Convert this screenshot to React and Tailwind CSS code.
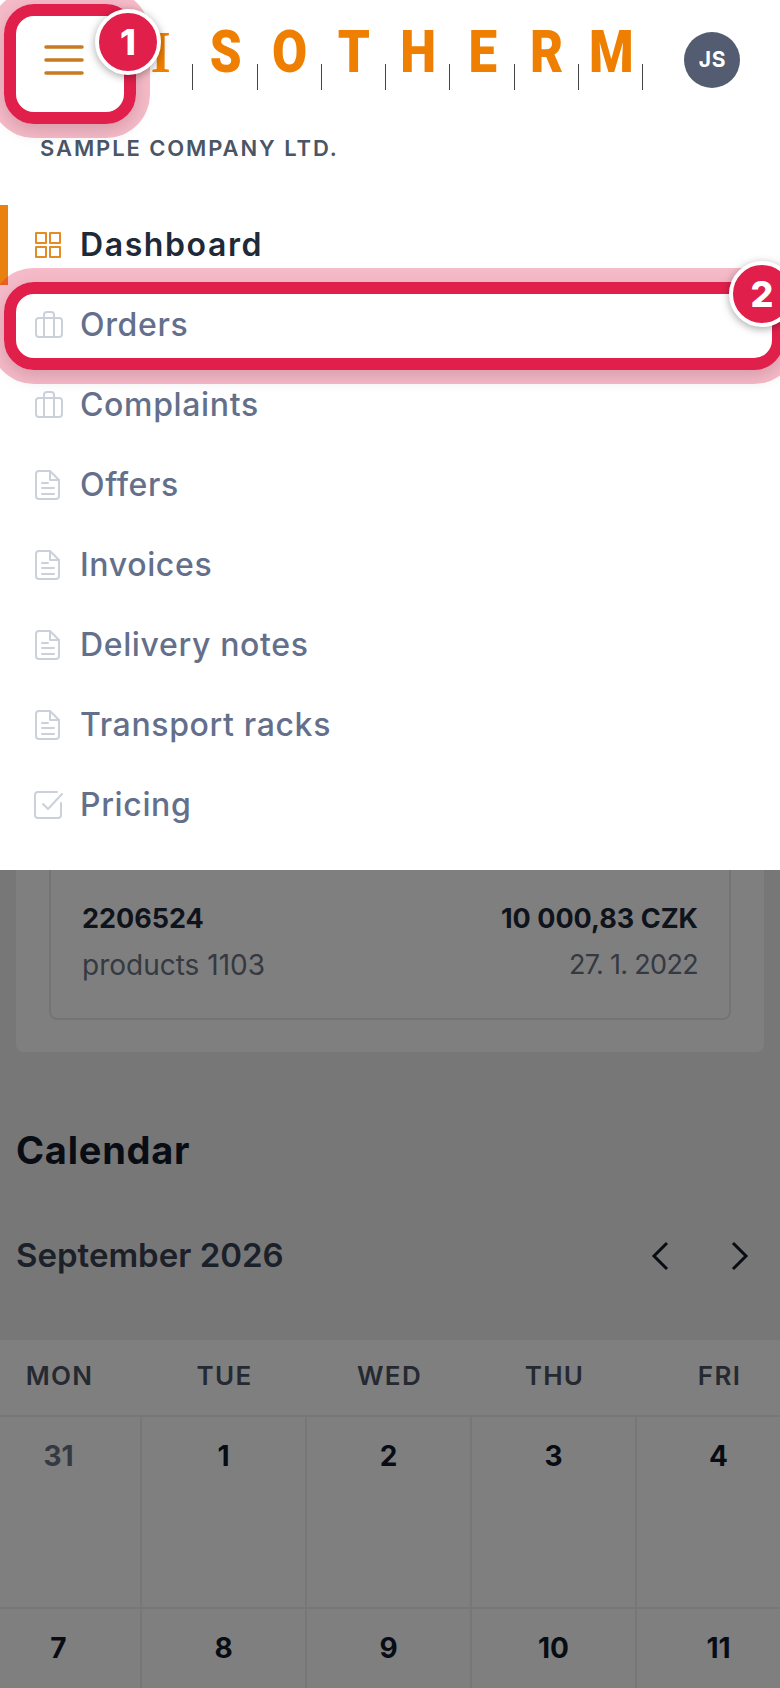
const LOGO = ['I', 'S', 'O', 'T', 'H', 'E', 'R', 'M'];

const MENU = [
    { label: 'Orders', icon: 'case', marked: true },
    { label: 'Complaints', icon: 'case' },
    { label: 'Offers', icon: 'doc' },
    { label: 'Invoices', icon: 'doc' },
    { label: 'Delivery notes', icon: 'doc' },
    { label: 'Transport racks', icon: 'doc' },
    { label: 'Pricing', icon: 'check' },
];

const WEEKDAYS = ['MON', 'TUE', 'WED', 'THU', 'FRI'];
const ROWS = [
    [31, 1, 2, 3, 4],
    [7, 8, 9, 10, 11],
];

function NavIcon({ name }) {
    if (name === 'grid') {
        return (
            <svg width="28" height="28" viewBox="0 0 28 28" fill="none" stroke="#e58a24" strokeWidth="2" strokeLinejoin="round">
                <rect x="2" y="2" width="10" height="10" />
                <rect x="16" y="2" width="10" height="10" />
                <rect x="2" y="16" width="10" height="10" />
                <rect x="16" y="16" width="10" height="10" />
            </svg>
        );
    }
    if (name === 'case') {
        return (
            <svg width="30" height="28" viewBox="0 0 30 28" fill="none" stroke="#cbd1db" strokeWidth="2" strokeLinejoin="round">
                <rect x="2" y="7" width="26" height="19" rx="3" />
                <path d="M10 26V4a3 3 0 0 1 3-3h4a3 3 0 0 1 3 3v22" />
            </svg>
        );
    }
    if (name === 'check') {
        return (
            <svg width="30" height="28" viewBox="0 0 30 28" fill="none" stroke="#cbd1db" strokeWidth="2" strokeLinecap="round" strokeLinejoin="round">
                <path d="M23 1H4a3 3 0 0 0-3 3v20a3 3 0 0 0 3 3h20a3 3 0 0 0 3-3V12" />
                <path d="M9 13l5 5L28 3" />
            </svg>
        );
    }
    return (
        <svg width="28" height="30" viewBox="0 0 28 30" fill="none" stroke="#cbd1db" strokeWidth="2" strokeLinecap="round" strokeLinejoin="round">
            <path d="M5 1h11l9 9v16a3 3 0 0 1-3 3H5a3 3 0 0 1-3-3V4a3 3 0 0 1 3-3z" />
            <path d="M16 1v9h9M8 13h6M8 18h12M8 24h12" />
        </svg>
    );
}

function Badge({ children, className }) {
    return (
        <div className={`absolute z-30 flex h-[66px] w-[66px] items-center justify-center rounded-full border-4 border-white bg-[#e01f4b] text-[36px] font-extrabold text-white shadow-[0_2px_8px_rgba(0,0,0,0.35)] ${className}`}>
            {children}
        </div>
    );
}

export default function App() {
    return (
        <div className="relative h-[1688px] w-[780px] overflow-hidden bg-[#efefef] font-['Inter',sans-serif]">
            <div className="pt-[800px]">
                <div className="mx-4 rounded-lg bg-white px-[33px] pb-[32px] pt-[33px]">
                    <div className="rounded-lg border-2 border-[#e8e8ea] px-[31px] pb-[32px] pt-[63px] text-[27px] leading-[42px]">
                        <div className="flex justify-between font-bold text-gray-800">
                            <span>2206524</span>
                            <span>10 000,83 CZK</span>
                        </div>
                        <div className="mt-[4px] flex justify-between text-gray-500">
                            <span className="text-[28px]">products 1103</span>
                            <span className="tracking-tight">27. 1. 2022</span>
                        </div>
                    </div>
                </div>

                <h2 className="ml-4 mt-[71px] text-[38px] font-bold leading-[54px] tracking-[0.02em] text-gray-900">Calendar</h2>

                <div className="mt-[55px] flex h-12 items-center justify-between px-4">
                    <span className="text-[33px] font-semibold text-gray-700">September 2026</span>
                    <div className="mr-[15px] flex gap-[62px]">
                        <svg width="18" height="30" viewBox="0 0 18 30" fill="none" stroke="#111827" strokeWidth="3"><path d="M16 2L3 15l13 13" /></svg>
                        <svg width="18" height="30" viewBox="0 0 18 30" fill="none" stroke="#111827" strokeWidth="3"><path d="M2 2l13 13L2 28" /></svg>
                    </div>
                </div>

                <div className="mt-[60px] bg-white">
                    <div className="ml-[-23px] grid w-[825px] grid-cols-5 border-b-2 border-[#eeeeee]">
                        {WEEKDAYS.map((d) => (
                            <div key={d} className="flex h-[75px] items-center justify-center pb-1 text-[26px] font-semibold tracking-[0.05em] text-gray-600">{d}</div>
                        ))}
                    </div>
                    {ROWS.map((row, i) => (
                        <div key={i} className="ml-[-23px] grid w-[825px] grid-cols-5">
                            {row.map((n) => (
                                <div key={n} className={`h-[192px] border-b-2 border-r-2 border-[#eeeeee] pt-[18px] text-center text-[28px] font-bold ${n === 31 ? 'text-gray-500' : 'text-gray-900'}`}>{n}</div>
                            ))}
                        </div>
                    ))}
                </div>
            </div>

            <div className="absolute inset-0 z-10 bg-black/50" />

            <div className="absolute inset-x-0 top-0 z-20 h-[870px] bg-white">
                <div className="flex h-[120px] items-center">
                    <div className="flex w-[129px] items-center pl-[44px]">
                        <svg width="40" height="30" viewBox="0 0 40 30" fill="none" stroke="#c77a1f" strokeWidth="3.5" strokeLinecap="round">
                            <path d="M2 2h36M2 15h36M2 28h36" />
                        </svg>
                    </div>
                    <div className="flex">
                        {LOGO.map((l) => (
                            <div key={l} className="relative h-[120px] w-[64.3px] text-center">
                                <span className={`inline-block origin-center scale-x-[0.85] text-[60px] font-black leading-[104px] text-[#ee7f00] ${l === 'I' ? "font-['Liberation_Serif']" : "font-['Roboto']"}`}>{l}</span>
                                <span className="absolute right-0 top-[64px] h-[26px] w-px bg-[#444444]" />
                            </div>
                        ))}
                    </div>
                    <div className="ml-[41px] flex h-14 w-14 items-center justify-center rounded-full bg-[#535c70] text-[21px] font-bold tracking-wide text-white">JS</div>
                </div>

                <div className="mt-[1px] pl-10 text-[22px] font-semibold leading-[54px] tracking-[1.9px] text-gray-600">SAMPLE COMPANY LTD.</div>

                <nav className="mt-[30px]">
                    <div className="flex h-20 items-center gap-[18px] border-l-8 border-[#ea800f] pl-[26px] text-[32px] font-semibold tracking-[0.05em] text-gray-800">
                        <NavIcon name="grid" />
                        <span>Dashboard</span>
                    </div>
                    {MENU.map((item) => (
                        <div key={item.label} className="relative flex h-20 items-center pl-[34px] text-[32px] font-medium tracking-[0.02em] text-[#64708b]">
                            <span className="flex w-[46px] justify-start">
                                <NavIcon name={item.icon} />
                            </span>
                            <span>{item.label}</span>
                            {item.marked && (
                                <div className="absolute bottom-[-5px] left-1 right-[-4px] top-[-3px] rounded-[30px] border-[12px] border-[#e01f4b] shadow-[0_0_0_14px_rgba(225,29,72,0.3),0_6px_18px_rgba(0,0,0,0.18)]" />
                            )}
                        </div>
                    ))}
                </nav>
            </div>

            <div className="absolute left-1 top-1 z-20 h-[120px] w-[132px] rounded-[30px] border-[12px] border-[#e01f4b] shadow-[0_0_0_14px_rgba(225,29,72,0.3),0_6px_18px_rgba(0,0,0,0.18)]" />
            <Badge className="left-[95px] top-[9px]">1</Badge>
            <Badge className="left-[729px] top-[261px]">2</Badge>
        </div>
    );
}
